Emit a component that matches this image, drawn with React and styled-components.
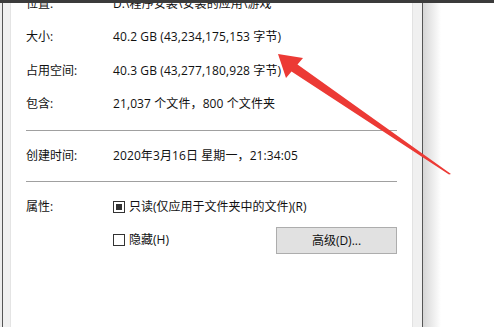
import { Fragment } from "react";
import styled, { createGlobalStyle } from "styled-components";

const GlobalStyle = createGlobalStyle`
  html, body {
    margin: 0;
    padding: 0;
    background: #ffffff;
  }

  body {
    font-family: "Open Sans", "Noto Sans CJK SC", sans-serif;
    font-size: 12px;
    color: #111111;
  }
`;

const Page = styled.div`
  position: relative;
  display: flex;
  flex-direction: column;

  width: 494px;
  height: 327px;

  overflow: hidden;
  background: #ffffff;
`;

const TopBar = styled.div`
  height: 3px;
  flex-shrink: 0;
  background: #3b3b3b;
`;

const Body = styled.div`
  display: flex;
  flex: 1;
  min-height: 0;
`;

const Strip = styled.div`
  flex-shrink: 0;
  width: ${(props) => props.$w}px;
  background: ${(props) => props.$bg};
  box-shadow: ${(props) => props.$inset || "none"};
`;

const Panel = styled.div`
  display: flex;
  flex-direction: column;

  width: 401px;
  flex-shrink: 0;

  padding: 0 15px;
  box-sizing: border-box;

  overflow: hidden;
  background: #ffffff;
`;

const Section = styled.div`
  display: grid;
  grid-template-columns: 87px 1fr;
  row-gap: 13.5px;

  margin-top: ${(props) => props.$top || 0}px;
  padding: ${(props) => props.$padTop}px 0 ${(props) => props.$padBottom}px;
`;

const Label = styled.div`
  line-height: 20px;
  white-space: nowrap;
`;

const Value = styled.div`
  line-height: 20px;
  white-space: nowrap;
  letter-spacing: 0.1px;
`;

const Divider = styled.div`
  height: 1px;
  background: #a0a0a0;
`;

const Attributes = styled.div`
  display: flex;
  flex-direction: column;
  gap: 13px;
`;

const AttrRow = styled.div`
  display: flex;
  align-items: center;
  justify-content: space-between;
  height: 20px;
`;

const CheckLabel = styled.label`
  display: flex;
  align-items: center;
  gap: 4px;
  line-height: 20px;
  white-space: nowrap;
`;

const Box = styled.span`
  position: relative;
  width: 12px;
  height: 12px;
  border: 1px solid #333333;
  box-sizing: border-box;
  background: #ffffff;

  &::after {
    content: "";
    display: ${(props) => (props.$checked ? "block" : "none")};
    position: absolute;
    left: 2px;
    top: 2px;
    width: 6px;
    height: 6px;
    background: #333333;
  }
`;

const Button = styled.button`
  width: 121px;
  height: 27px;

  border: 1px solid #adadad;
  border-radius: 0;
  background: #e1e1e1;

  font-family: inherit;
  font-size: 12px;
  color: #111111;

  padding: 0;
  cursor: pointer;
`;

const Arrow = styled.svg`
  position: absolute;
  left: 0;
  top: 0;
  pointer-events: none;
`;

const infoRows = [
  ["位置:", "D:\\程序安装\\安装的应用\\游戏"],
  ["大小:", "40.2 GB (43,234,175,153 字节)"],
  ["占用空间:", "40.3 GB (43,277,180,928 字节)"],
  ["包含:", "21,037 个文件，800 个文件夹"],
];

function Checkbox({ checked, children }) {
  return (
    <CheckLabel>
      <Box $checked={checked} />
      {children}
    </CheckLabel>
  );
}

export default function App() {
  return (
    <>
      <GlobalStyle />
      <Page>
        <TopBar />
        <Body>
          <Strip $w={2} $bg="#ececec" />
          <Strip $w={1} $bg="#555555" />
          <Strip $w={8} $bg="#f0f0f0" $inset="inset -1px 0 0 #e4e4e4" />
          <Panel>
            <Section $top={-9.5} $padTop={0} $padBottom={16}>
              {infoRows.map(([label, value]) => (
                <Fragment key={label}>
                  <Label>{label}</Label>
                  <Value>{value}</Value>
                </Fragment>
              ))}
            </Section>
            <Divider />
            <Section $padTop={15} $padBottom={15}>
              <Label>创建时间:</Label>
              <Value>2020年3月16日 星期一，21:34:05</Value>
            </Section>
            <Divider />
            <Section $padTop={15} $padBottom={0}>
              <Label>属性:</Label>
              <Attributes>
                <AttrRow>
                  <Checkbox checked>只读(仅应用于文件夹中的文件)(R)</Checkbox>
                </AttrRow>
                <AttrRow>
                  <Checkbox>隐藏(H)</Checkbox>
                  <Button>高级(D)...</Button>
                </AttrRow>
              </Attributes>
            </Section>
          </Panel>
          <Strip $w={10} $bg="#f0f0f0" $inset="inset 1px 0 0 #e2e2e2" />
          <Strip $w={1} $bg="#555555" />
          <Strip $w={18} $bg="linear-gradient(to right, #d6d6d6, #ffffff)" />
        </Body>
        <Arrow width="494" height="327" viewBox="0 0 494 327">
          <polygon
            points="278,54 303,58 297.5,64.5 451,174 449,174.5 291.5,71.5 286,78"
            fill="#ec3a35"
          />
        </Arrow>
      </Page>
    </>
  );
}
